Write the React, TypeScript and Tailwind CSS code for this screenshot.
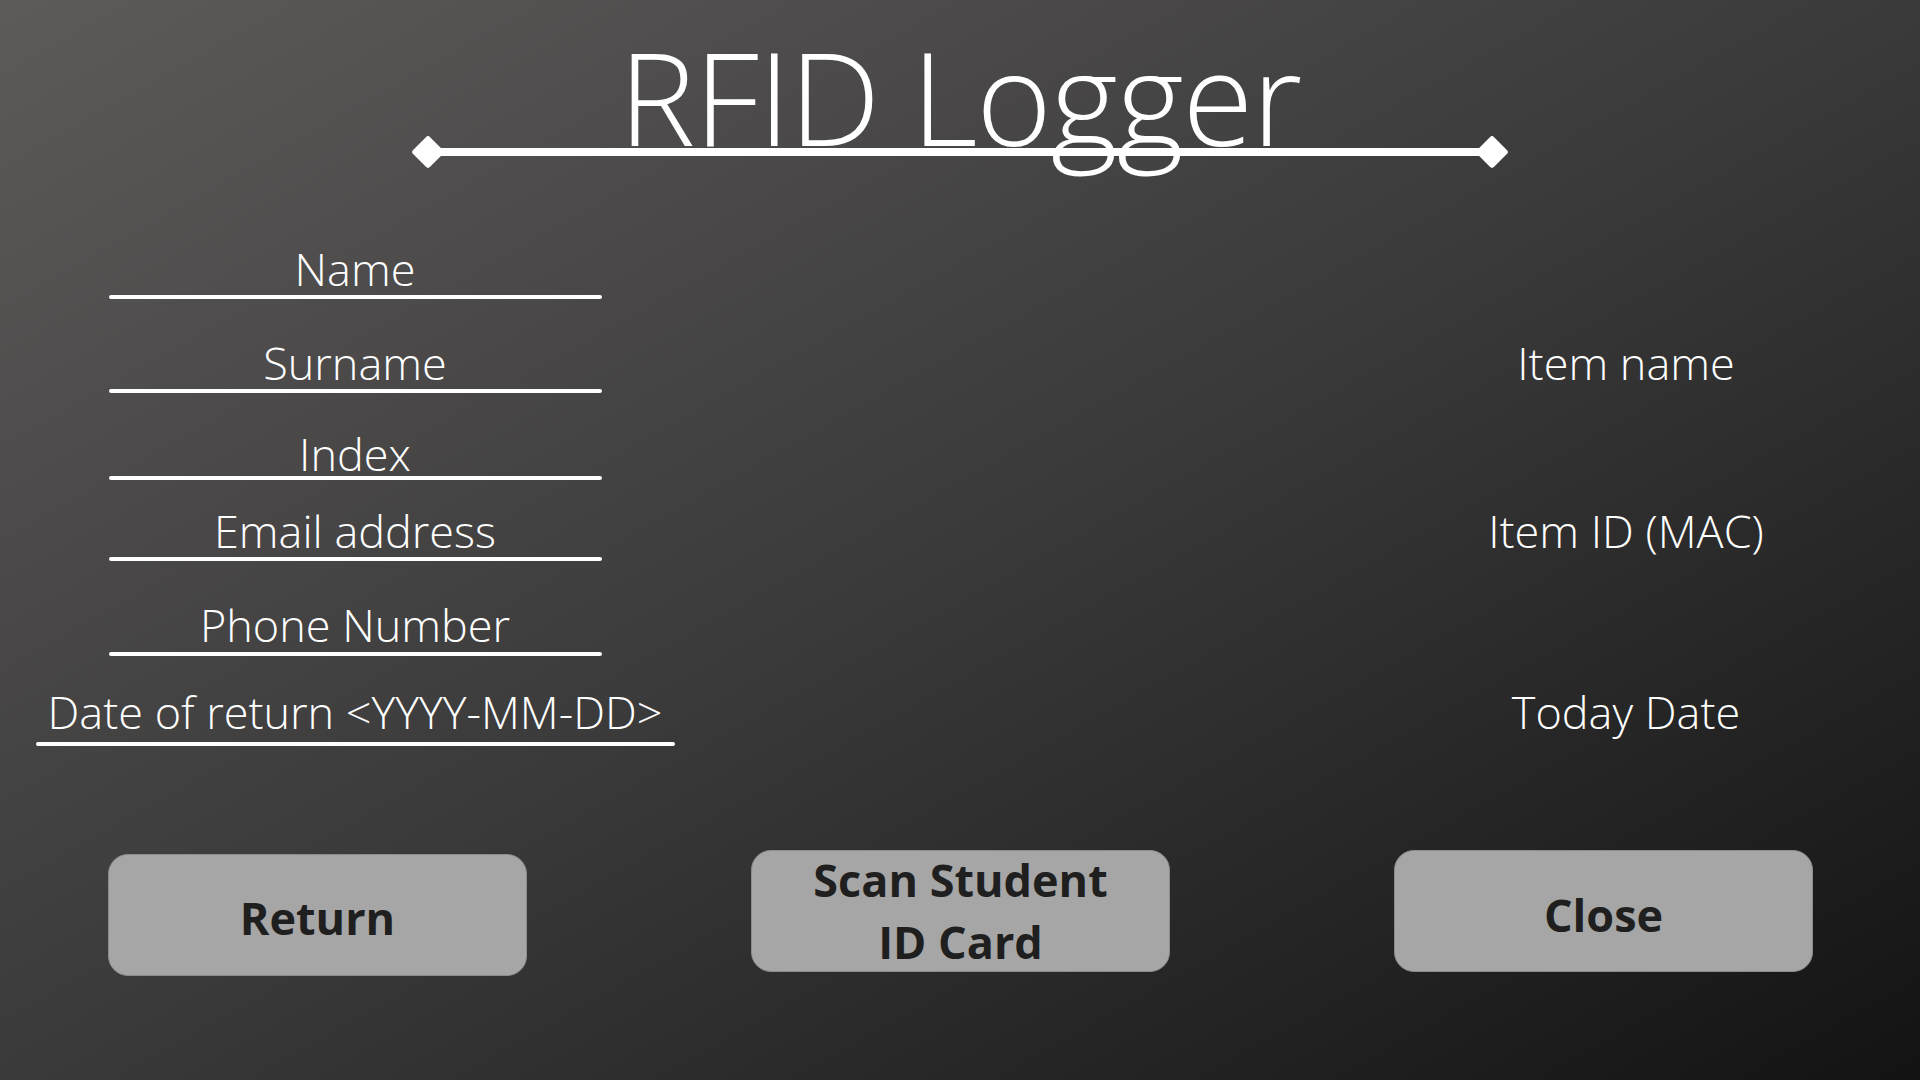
import React from "react";

const rows: { left: string; right?: string; wide?: boolean; mt: string; textPad?: string; lineMt: string }[] = [
  { left: "Name", mt: "mt-[81px]", textPad: "pt-[2px]", lineMt: "mt-[4px]" },
  { left: "Surname", right: "Item name", mt: "mt-[42px]", lineMt: "mt-[4px]" },
  { left: "Index", mt: "mt-[29px]", textPad: "pt-[10px]", lineMt: "mt-[0px]" },
  { left: "Email address", right: "Item ID (MAC)", mt: "mt-[29px]", lineMt: "mt-[4px]" },
  { left: "Phone Number", mt: "mt-[42px]", lineMt: "mt-[5px]" },
  { left: "Date of return <YYYY-MM-DD>", right: "Today Date", wide: true, mt: "mt-[34px]", lineMt: "mt-[8px]" },
];

function Diamond() {
  return <div className="h-[24px] w-[24px] shrink-0 rotate-45 rounded-[3px] bg-white" />;
}

export default function App() {
  return (
    <div
      className="flex h-[1080px] w-[1920px] flex-col overflow-hidden bg-[linear-gradient(to_bottom_right,#5d5b5a_0%,#3b3a3a_50%,#131313_100%)] text-white"
      style={{ fontFamily: '"Open Sans", "Noto Sans", sans-serif' }}
    >
      {/* Header */}
      <div className="flex flex-col items-center">
        <h1 className="pt-[32px] text-center text-[129px] font-[330] leading-none tracking-[-1.2px]">RFID Logger</h1>
        <div className="mt-[-21px] flex w-[1088px] items-center">
          <Diamond />
          <div className="mx-[-2px] h-[8px] flex-1 bg-white" />
          <Diamond />
        </div>
      </div>

      {/* Form */}
      <div className="flex flex-col">
        {rows.map((r, i) => (
          <div key={i} className={`grid grid-cols-[710px_1fr_588px] ${r.mt}`}>
            <div className="flex flex-col items-center">
              <div className={`whitespace-nowrap text-center text-[45px] font-light leading-[44px] ${r.textPad ?? ""}`}>{r.left}</div>
              <div className={`h-[4px] rounded-full bg-white ${r.lineMt} ${r.wide ? "w-[639px]" : "w-[493px]"}`} />
            </div>
            <div />
            <div className={`text-center text-[45px] font-light leading-[44px] whitespace-nowrap ${r.textPad ?? ""}`}>{r.right ?? ""}</div>
          </div>
        ))}
      </div>

      {/* Buttons */}
      <div className="mt-[104px] flex items-start gap-[224px] pl-[108px]">
        <button className="mt-[4px] flex h-[122px] w-[419px] items-center justify-center rounded-[20px] border border-[#8c8c8c] bg-[#a6a6a6] pt-[5px] text-[45px] font-bold leading-none text-[#1f1f1f]">
          Return
        </button>
        <button className="flex h-[122px] w-[419px] flex-col items-center justify-center rounded-[20px] border border-[#8c8c8c] bg-[#a6a6a6] text-[45px] font-bold leading-[62px] text-[#1f1f1f]">
          <span>Scan Student</span>
          <span>ID Card</span>
        </button>
        <button className="flex h-[122px] w-[419px] items-center justify-center rounded-[20px] border border-[#8c8c8c] bg-[#a6a6a6] pt-[7px] text-[45px] font-bold leading-none text-[#1f1f1f]">
          Close
        </button>
      </div>
    </div>
  );
}
